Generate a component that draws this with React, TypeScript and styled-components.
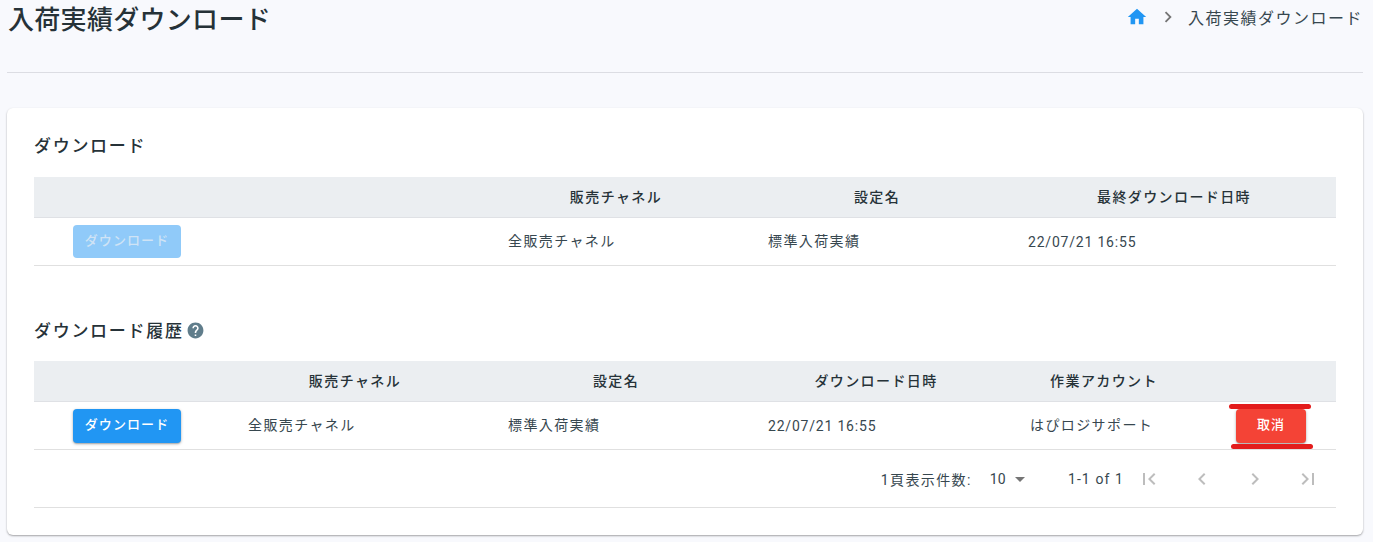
import React from "react";
import styled, { createGlobalStyle } from "styled-components";

const Global = createGlobalStyle`
  html, body { margin: 0; padding: 0; background: #f8f9fd; overflow: hidden; }
  body { font-family: Roboto, "Noto Sans CJK JP", sans-serif; color: #263238; }
`;

const Page = styled.div`
  position: relative;
  padding: 0 10px 0 7px;
  height: 542px;
  box-sizing: border-box;
`;

const Header = styled.header`
  height: 73px;
  box-sizing: border-box;
  border-bottom: 1px solid #dcdde3;
  display: flex;
  justify-content: space-between;
  align-items: flex-start;
`;

const Title = styled.h1`
  margin: 0 0 0 1px;
  font-size: 26px;
  letter-spacing: 0.3px;
  line-height: 40px;
  font-weight: 500;
  color: #263238;
`;

const Crumbs = styled.nav`
  display: flex;
  align-items: center;
  height: 34px;
  font-size: 16px;
  letter-spacing: 1.5px;
  color: #37474f;
`;

const CrumbSep = styled.span`
  display: flex;
  margin: 0 9px;
`;

const Card = styled.section`
  display: flow-root;
  margin-top: 35px;
  height: 427px;
  box-sizing: border-box;
  background: #fff;
  border-radius: 6px;
  box-shadow: 0 1px 2px rgba(0, 0, 0, 0.35);
  padding: 0 27px;
`;

const SectionTitle = styled.h2<{ $top: number; $bottom: number }>`
  margin: ${(p) => p.$top}px 0 ${(p) => p.$bottom}px;
  display: flex;
  align-items: center;
  gap: 2px;
  height: 36px;
  box-sizing: border-box;
  padding-bottom: 2px;
  font-size: 17px;
  letter-spacing: 1.7px;
  font-weight: 500;
  color: #263238;
`;

const HelpMark = styled.span`
  display: flex;
  margin-top: 2px;
`;

const HeadRow = styled.div<{ $cols: string }>`
  display: grid;
  grid-template-columns: ${(p) => p.$cols};
  height: 41px;
  box-sizing: border-box;
  align-items: center;
  background: #ebeef1;
  border-bottom: 1px solid #dfe1e5;
`;

const HeadCell = styled.div`
  padding-bottom: 2px;
  text-align: center;
  font-size: 14px;
  font-weight: 500;
  letter-spacing: 1.4px;
  color: #263238;
`;

const BodyRow = styled.div<{ $cols: string }>`
  display: grid;
  grid-template-columns: ${(p) => p.$cols};
  height: 48px;
  box-sizing: border-box;
  align-items: center;
  border-bottom: 1px solid #e0e0e0;
`;

const BodyCell = styled.div<{ $inset: number }>`
  padding-left: ${(p) => p.$inset}px;
  padding-bottom: 4px;
  font-size: 14px;
  letter-spacing: 1.4px;
  color: #37474f;
`;

const DateCell = styled(BodyCell)`
  padding-top: 1px;
  padding-bottom: 0;
  letter-spacing: 0.8px;
`;

const ActionCell = styled.div<{ $inset: number }>`
  padding-left: ${(p) => p.$inset}px;
`;

const Button = styled.button<{ $tone: "primary" | "disabled" | "danger"; $w: number; $h: number }>`
  display: flex;
  align-items: center;
  justify-content: center;
  width: ${(p) => p.$w}px;
  height: ${(p) => p.$h}px;
  border: 0;
  border-radius: 4px;
  padding: 0 0 4px;
  box-sizing: border-box;
  font-family: inherit;
  font-size: 13px;
  font-weight: 500;
  letter-spacing: 1.1px;
  color: ${(p) => (p.$tone === "disabled" ? "#cfe3f5" : "#fff")};
  background: ${(p) =>
    p.$tone === "primary" ? "#2196f3" : p.$tone === "danger" ? "#f44336" : "#90caf9"};
  box-shadow: ${(p) =>
    p.$tone === "disabled"
      ? "none"
      : "0 1px 3px rgba(0,0,0,.3), 0 1px 1px rgba(0,0,0,.12)"};
`;

const Pager = styled.div`
  display: flex;
  align-items: center;
  justify-content: flex-end;
  height: 58px;
  box-sizing: border-box;
  padding-right: 16px;
  border-bottom: 1px solid #e0e0e0;
  font-size: 14px;
  letter-spacing: 1.1px;
  color: #37474f;
`;

const PerPage = styled.span`
  margin-right: 18px;
  letter-spacing: 1.4px;
`;

const Select = styled.span`
  display: flex;
  align-items: center;
  gap: 2px;
  margin-right: 36px;
  letter-spacing: 0.2px;
`;

const Range = styled.span`
  margin-right: 13px;
`;

const PageIcons = styled.div`
  display: flex;
  gap: 29px;
`;

const Icon = styled.svg<{ $size: number; $color: string }>`
  display: block;
  flex: none;
  width: ${(p) => p.$size}px;
  height: ${(p) => p.$size}px;
  fill: ${(p) => p.$color};
`;

const Mark = styled.span<{ $left: number; $top: number; $width: number }>`
  position: absolute;
  left: ${(p) => p.$left}px;
  top: ${(p) => p.$top}px;
  width: ${(p) => p.$width}px;
  height: 5px;
  border-radius: 3px;
  background: #e31c1c;
`;

const P = {
  home: "M10 20v-6h4v6h5v-8h3L12 3 2 12h3v8z",
  next: "M10 6L8.59 7.41 13.17 12l-4.58 4.59L10 18l6-6z",
  prev: "M15.41 7.41L14 6l-6 6 6 6 1.41-1.41L10.83 12z",
  first: "M18.41 16.59L13.82 12l4.59-4.59L17 6l-6 6 6 6zM6 6h2v12H6z",
  last: "M5.59 7.41L10.18 12l-4.59 4.59L7 18l6-6-6-6zM16 6h2v12h-2z",
  help: "M12 2C6.48 2 2 6.48 2 12s4.48 10 10 10 10-4.48 10-10S17.52 2 12 2zm1 17h-2v-2h2v2zm2.07-7.75l-.9.92C13.45 12.9 13 13.5 13 15h-2v-.5c0-1.1.45-2.1 1.17-2.83l1.24-1.26c.37-.36.59-.86.59-1.41 0-1.1-.9-2-2-2s-2 .9-2 2H8c0-2.21 1.79-4 4-4s4 1.79 4 4c0 .88-.36 1.68-.93 2.25z",
  drop: "M7 10l5 5 5-5z",
};

const Glyph = ({ d, size, color }: { d: string; size: number; color: string }) => (
  <Icon viewBox="0 0 24 24" $size={size} $color={color}>
    <path d={d} />
  </Icon>
);

const topCols = "456px 252px 270px 324px";
const histCols = "190px 262px 260px 260px 196px 134px";

export default function App() {
  return (
    <Page>
      <Global />
      <Header>
        <Title>入荷実績ダウンロード</Title>
        <Crumbs>
          <Glyph d={P.home} size={22} color="#2196f3" />
          <CrumbSep>
            <Glyph d={P.next} size={22} color="#757575" />
          </CrumbSep>
          入荷実績ダウンロード
        </Crumbs>
      </Header>
      <Card>
        <SectionTitle $top={19} $bottom={14}>ダウンロード</SectionTitle>
        <HeadRow $cols={topCols}>
          <span />
          <HeadCell>販売チャネル</HeadCell>
          <HeadCell>設定名</HeadCell>
          <HeadCell>最終ダウンロード日時</HeadCell>
        </HeadRow>
        <BodyRow $cols={topCols}>
          <ActionCell $inset={39}>
            <Button $tone="disabled" $w={108} $h={33} disabled>ダウンロード</Button>
          </ActionCell>
          <BodyCell $inset={18}>全販売チャネル</BodyCell>
          <BodyCell $inset={26}>標準入荷実績</BodyCell>
          <DateCell $inset={16}>22/07/21 16:55</DateCell>
        </BodyRow>
        <SectionTitle $top={46} $bottom={13}>
          ダウンロード履歴
          <HelpMark>
            <Glyph d={P.help} size={19} color="#607d8b" />
          </HelpMark>
        </SectionTitle>
        <HeadRow $cols={histCols}>
          <span />
          <HeadCell>販売チャネル</HeadCell>
          <HeadCell>設定名</HeadCell>
          <HeadCell>ダウンロード日時</HeadCell>
          <HeadCell>作業アカウント</HeadCell>
          <span />
        </HeadRow>
        <BodyRow $cols={histCols}>
          <ActionCell $inset={39}>
            <Button $tone="primary" $w={108} $h={34}>ダウンロード</Button>
          </ActionCell>
          <BodyCell $inset={24}>全販売チャネル</BodyCell>
          <BodyCell $inset={22}>標準入荷実績</BodyCell>
          <DateCell $inset={22}>22/07/21 16:55</DateCell>
          <BodyCell $inset={24}>はぴロジサポート</BodyCell>
          <ActionCell $inset={34}>
            <Button $tone="danger" $w={70} $h={34}>取消</Button>
          </ActionCell>
        </BodyRow>
        <Pager>
          <PerPage>1頁表示件数:</PerPage>
          <Select>
            10
            <Glyph d={P.drop} size={24} color="#757575" />
          </Select>
          <Range>1-1 of 1</Range>
          <PageIcons>
            <Glyph d={P.first} size={24} color="#bdbdbd" />
            <Glyph d={P.prev} size={24} color="#bdbdbd" />
            <Glyph d={P.next} size={24} color="#bdbdbd" />
            <Glyph d={P.last} size={24} color="#bdbdbd" />
          </PageIcons>
        </Pager>
      </Card>
      <Mark $left={1229} $top={404} $width={82} />
      <Mark $left={1231} $top={444} $width={82} />
    </Page>
  );
}
